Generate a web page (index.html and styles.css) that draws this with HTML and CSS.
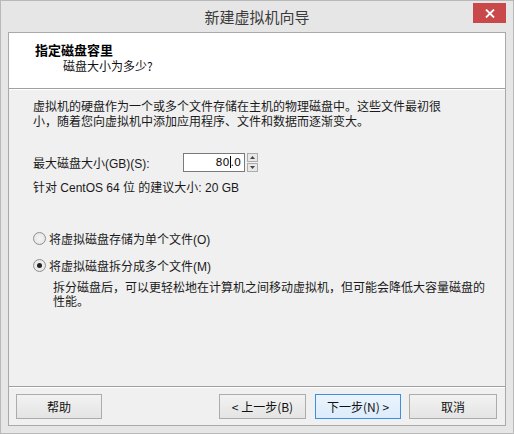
FILE: index.html
```html
<!DOCTYPE html>
<html lang="zh-CN">
<head>
<meta charset="utf-8">
<title>新建虚拟机向导</title>
<link rel="stylesheet" href="styles.css">
</head>
<body>
<div class="window">
  <div class="titlebar">
    <div class="tb-side"></div>
    <div class="title">新建虚拟机向导</div>
    <div class="tb-side tb-right">
      <div class="close">
        <svg width="10" height="9" viewBox="0 0 10 9"><path d="M1 0.5 L9 8.5 M9 0.5 L1 8.5" stroke="#fff" stroke-width="1.8"/></svg>
      </div>
    </div>
  </div>
  <div class="client">
    <div class="header">
      <div class="h-title">指定磁盘容里</div>
      <div class="h-sub">磁盘大小为多少?</div>
    </div>
    <div class="body">
      <p class="intro">虚拟机的硬盘作为一个或多个文件存储在主机的物理磁盘中。这些文件最初很<br>小，随着您向虚拟机中添加应用程序、文件和数据而逐渐变大。</p>
      <div class="size-row">
        <span class="label">最大磁盘大小(GB)(S):</span>
        <div class="spin">
          <div class="spin-input">80<span class="caret"></span>.0</div>
          <div class="spin-btns">
            <div class="spin-btn"><svg width="5" height="3" viewBox="0 0 5 3"><path d="M0 3 L2.5 0 L5 3Z" fill="#444"/></svg></div>
            <div class="spin-btn"><svg width="5" height="3" viewBox="0 0 5 3"><path d="M0 0 L2.5 3 L5 0Z" fill="#444"/></svg></div>
          </div>
        </div>
      </div>
      <div class="rec">针对 CentOS 64 位 的建议大小: 20 GB</div>
      <div class="radio-row first"><span class="radio"></span><span>将虚拟磁盘存储为单个文件(O)</span></div>
      <div class="radio-row second"><span class="radio checked"></span><span>将虚拟磁盘拆分成多个文件(M)</span></div>
      <p class="desc">拆分磁盘后，可以更轻松地在计算机之间移动虚拟机，但可能会降低大容量磁盘的<br>性能。</p>
    </div>
    <div class="footer">
      <div class="btn help">帮助</div>
      <div class="spacer"></div>
      <div class="btn back">&lt; 上一步(B)</div>
      <div class="btn next">下一步(N) &gt;</div>
      <div class="btn cancel">取消</div>
    </div>
  </div>
</div>
</body>
</html>
```
FILE: styles.css
```css
html, body {
  margin: 0;
  padding: 0;
  background: #e6e6e6;
}
.window {
  box-sizing: border-box;
  width: 514px;
  height: 434px;
  background: #e6e6e6;
  border: 1px solid #b9b9b9;
  display: flex;
  flex-direction: column;
  font-family: "Liberation Sans", "Noto Sans CJK SC", sans-serif;
  font-size: 12px;
  color: #1a1a1a;
}
.titlebar {
  height: 31px;
  display: grid;
  grid-template-columns: 1fr auto 1fr;
  align-items: start;
}
.title {
  font-family: "Noto Sans CJK SC", sans-serif;
  font-size: 15px;
  color: #3a3a3a;
  line-height: 20px;
  padding-top: 6px;
}
.tb-right {
  display: flex;
  justify-content: flex-end;
  padding-right: 7px;
  padding-top: 2px;
}
.close {
  width: 33px;
  height: 20px;
  background: #c9494b;
  display: flex;
  align-items: center;
  justify-content: center;
}
.client {
  flex: 1;
  margin: 0 7px 7px 7px;
  border: 1px solid #a9a9a9;
  background: #f0f0f0;
  display: flex;
  flex-direction: column;
}
.header {
  height: 56px;
  background: #fff;
  border-bottom: 1px solid #a0a0a0;
  box-sizing: border-box;
  padding-top: 9px;
}
.h-title {
  font-family: "Noto Sans CJK SC", sans-serif;
  font-weight: bold;
  font-size: 13px;
  line-height: 16px;
  margin-left: 26px;
  color: #000;
}
.h-sub {
  font-family: "Noto Sans CJK SC", sans-serif;
  font-size: 12px;
  line-height: 15px;
  margin-left: 54px;
  color: #111;
}
.body {
  flex: 1;
  padding: 10px 0 0 24px;
  border-top: 1px solid #fff;
}
p { margin: 0; }
.intro {
  line-height: 15px;
}
.size-row {
  margin-top: 23px;
  height: 19px;
  display: flex;
  align-items: center;
}
.label {
  width: 150px;
}
.spin {
  display: flex;
  height: 19px;
}
.spin-input {
  box-sizing: border-box;
  width: 62px;
  height: 19px;
  border: 1px solid #7a7a7a;
  background: #fff;
  text-align: right;
  padding-right: 3px;
  line-height: 17px;
  font-family: "DejaVu Sans", sans-serif;
  font-size: 11px;
  color: #111;
}
.caret {
  display: inline-block;
  width: 1px;
  height: 12px;
  background: #000;
  vertical-align: -2px;
}
.spin-btns {
  display: flex;
  flex-direction: column;
  margin-left: 2px;
  width: 11px;
  height: 19px;
  gap: 1px;
}
.spin-btn {
  flex: 1;
  border: 1px solid #acacac;
  background: #e8e8e8;
  display: flex;
  align-items: center;
  justify-content: center;
}
.rec {
  margin-top: 9px;
  line-height: 15px;
}
.radio-row {
  display: flex;
  align-items: center;
  height: 16px;
}
.radio-row.first { margin-top: 34px; }
.radio-row.second { margin-top: 11px; }
.radio {
  box-sizing: border-box;
  width: 13px;
  height: 13px;
  border-radius: 50%;
  border: 1px solid #8f8f8f;
  background: radial-gradient(circle, #f4f4f4 0%, #e2e2e2 100%);
  margin-right: 3px;
  display: flex;
  align-items: center;
  justify-content: center;
}
.radio.checked::after {
  content: "";
  width: 5px;
  height: 5px;
  border-radius: 50%;
  background: #222;
}
.desc {
  margin-top: 8px;
  margin-left: 20px;
  line-height: 14px;
}
.footer {
  height: 39px;
  border-top: 1px solid #a0a0a0;
  box-shadow: inset 0 1px 0 #fff;
  display: flex;
  align-items: center;
  padding: 0 8px 0 7px;
  box-sizing: border-box;
}
.spacer { flex: 1; }
.btn {
  box-sizing: border-box;
  height: 25px;
  border: 1px solid #acacac;
  background: linear-gradient(#f2f2f2, #e4e4e4);
  display: flex;
  align-items: center;
  justify-content: center;
  font-family: "Noto Sans CJK SC", sans-serif;
  font-size: 12px;
  color: #111;
}
.help { width: 86px; }
.back { width: 87px; }
.next {
  width: 86px;
  margin-left: 9px;
  border-color: #3c8ee0;
  background: linear-gradient(#eaf4fc, #dcecfc);
}
.cancel { width: 88px; margin-left: 8px; }
```
